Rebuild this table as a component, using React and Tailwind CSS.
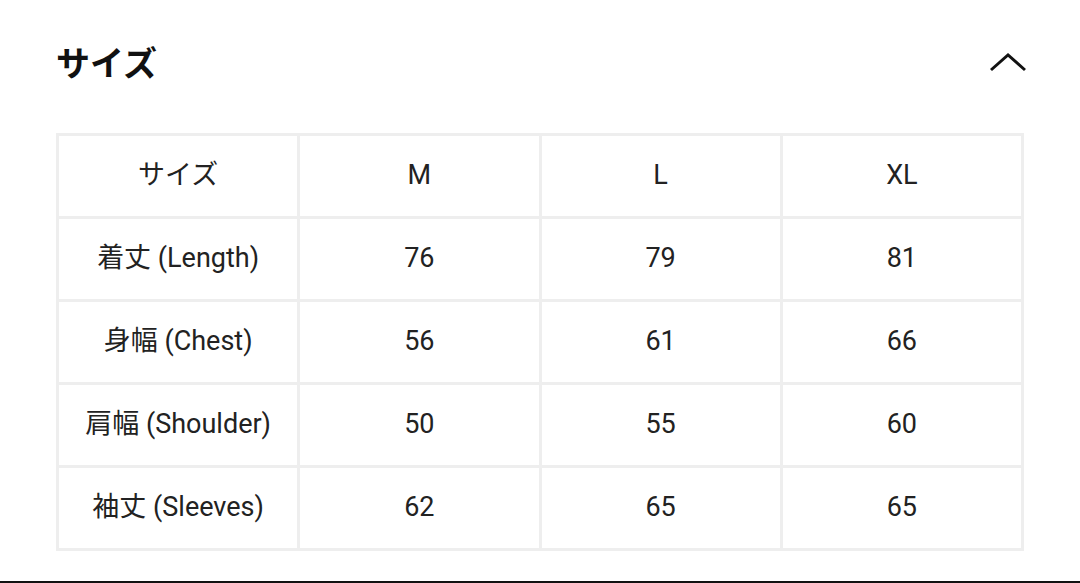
const rows = [
  ["サイズ", "M", "L", "XL"],
  ["着丈 (Length)", "76", "79", "81"],
  ["身幅 (Chest)", "56", "61", "66"],
  ["肩幅 (Shoulder)", "50", "55", "60"],
  ["袖丈 (Sleeves)", "62", "65", "65"],
];

export default function App() {
  return (
    <div
      className="h-[583px] w-[1080px] bg-white px-[56px] border-b-2 border-[#111]"
      style={{ fontFamily: 'Roboto, "Noto Sans CJK JP", sans-serif' }}
    >
      <div className="flex items-center justify-between pt-[42px]">
        <h2 className="text-[34px] leading-[44px] font-bold text-[#111]">サイズ</h2>
        <svg width="38" height="20" viewBox="0 0 38 20" className="-mr-[3px] -mt-[4px]" fill="none">
          <path d="M2 18 L19 3 L36 18" stroke="#111" strokeWidth="3" />
        </svg>
      </div>

      <div className="mt-[47px] grid grid-cols-4 gap-[3px] bg-[#eeeeee] p-[3px]">
        {rows.map((row, i) =>
          row.map((cell, j) => (
            <div
              key={i + "-" + j}
              className="flex h-[80px] items-center justify-center bg-white pb-[1px] text-[27px] text-[#222]"
            >
              {cell}
            </div>
          ))
        )}
      </div>
    </div>
  );
}
